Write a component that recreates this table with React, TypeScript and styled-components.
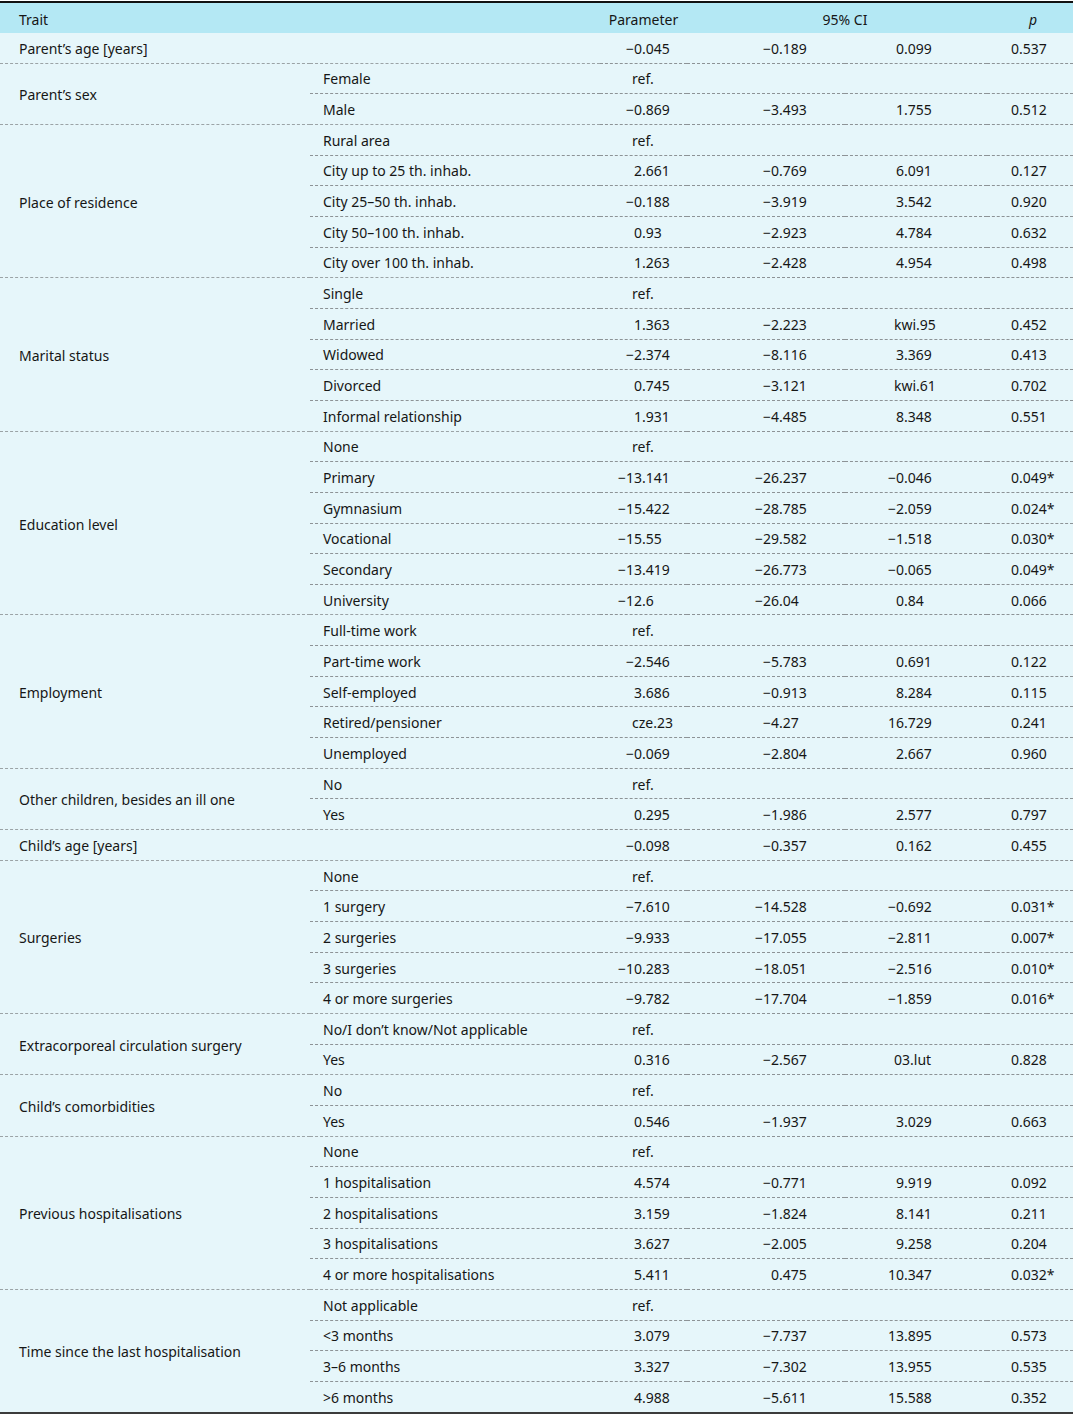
import styled, { createGlobalStyle } from "styled-components";

const GlobalStyle = createGlobalStyle`
    html, body {
        margin: 0;
        padding: 0;
        background: #ffffff;
    }
    body {
        font-family: "Noto Sans", "Open Sans", sans-serif;
        font-size: 14px;
        color: #161616;
    }
`;

const Table = styled.table`
    width: 1073px;
    margin-top: 1px;
    border-collapse: collapse;
    table-layout: fixed;
    border-top: 2px solid #111;
    border-bottom: 2px solid #3b3b3b;
    background: #e6f6fa;
`;

const HeadRow = styled.tr`
    background: #b4e8f4;
`;

const HeadCell = styled.th<{ $align?: string; $pl?: number; $pr?: number }>`
    height: 27px;
    padding: 3px ${(p) => p.$pr ?? 0}px 0 ${(p) => p.$pl ?? 0}px;
    font-weight: 400;
    line-height: 18px;
    text-align: ${(p) => p.$align ?? "center"};
    white-space: nowrap;
`;

const Italic = styled.i`
    font-family: "Noto Sans", sans-serif;
`;

const Row = styled.tr``;

const TraitCell = styled.td`
    padding: 3px 0 0 19px;
    line-height: 18px;
    border-bottom: 1px dashed #9ba3a6;
    vertical-align: middle;
    white-space: nowrap;
`;

const SubCell = styled.td<{ $last?: boolean }>`
    height: 27.67px;
    padding: 2px 0 0 13px;
    line-height: 18px;
    border-bottom: 1px dashed ${(p) => (p.$last ? "#9ba3a6" : "#8d9396")};
    white-space: nowrap;
`;

const NumCell = styled.td<{ $pr: number }>`
    padding: 2px ${(p) => p.$pr}px 0 0;
    line-height: 18px;
    text-align: right;
    border-bottom: 1px dashed #8d9396;
    white-space: nowrap;
`;

const Num = styled.span`
    display: inline-flex;
`;

const Int = styled.span`
    display: inline-block;
    width: 26px;
    text-align: right;
`;

const Frac = styled.span`
    display: inline-block;
    width: 28px;
    text-align: left;
    white-space: nowrap;
`;

const Txt = styled.span`
    display: inline-block;
    width: 54px;
    padding-left: 16px;
    box-sizing: border-box;
    text-align: left;
    white-space: nowrap;
`;

type Line = { label: string; vals?: string[] };
type Group = { trait: string; rows: Line[] };

const groups: Group[] = [
    { trait: "Parent’s age [years]", rows: [{ label: "", vals: ["−0.045", "−0.189", "0.099", "0.537"] }] },
    {
        trait: "Parent’s sex",
        rows: [
            { label: "Female" },
            { label: "Male", vals: ["−0.869", "−3.493", "1.755", "0.512"] },
        ],
    },
    {
        trait: "Place of residence",
        rows: [
            { label: "Rural area" },
            { label: "City up to 25 th. inhab.", vals: ["2.661", "−0.769", "6.091", "0.127"] },
            { label: "City 25–50 th. inhab.", vals: ["−0.188", "−3.919", "3.542", "0.920"] },
            { label: "City 50–100 th. inhab.", vals: ["0.93", "−2.923", "4.784", "0.632"] },
            { label: "City over 100 th. inhab.", vals: ["1.263", "−2.428", "4.954", "0.498"] },
        ],
    },
    {
        trait: "Marital status",
        rows: [
            { label: "Single" },
            { label: "Married", vals: ["1.363", "−2.223", "kwi.95", "0.452"] },
            { label: "Widowed", vals: ["−2.374", "−8.116", "3.369", "0.413"] },
            { label: "Divorced", vals: ["0.745", "−3.121", "kwi.61", "0.702"] },
            { label: "Informal relationship", vals: ["1.931", "−4.485", "8.348", "0.551"] },
        ],
    },
    {
        trait: "Education level",
        rows: [
            { label: "None" },
            { label: "Primary", vals: ["−13.141", "−26.237", "−0.046", "0.049*"] },
            { label: "Gymnasium", vals: ["−15.422", "−28.785", "−2.059", "0.024*"] },
            { label: "Vocational", vals: ["−15.55", "−29.582", "−1.518", "0.030*"] },
            { label: "Secondary", vals: ["−13.419", "−26.773", "−0.065", "0.049*"] },
            { label: "University", vals: ["−12.6", "−26.04", "0.84", "0.066"] },
        ],
    },
    {
        trait: "Employment",
        rows: [
            { label: "Full-time work" },
            { label: "Part-time work", vals: ["−2.546", "−5.783", "0.691", "0.122"] },
            { label: "Self-employed", vals: ["3.686", "−0.913", "8.284", "0.115"] },
            { label: "Retired/pensioner", vals: ["cze.23", "−4.27", "16.729", "0.241"] },
            { label: "Unemployed", vals: ["−0.069", "−2.804", "2.667", "0.960"] },
        ],
    },
    {
        trait: "Other children, besides an ill one",
        rows: [
            { label: "No" },
            { label: "Yes", vals: ["0.295", "−1.986", "2.577", "0.797"] },
        ],
    },
    { trait: "Child’s age [years]", rows: [{ label: "", vals: ["−0.098", "−0.357", "0.162", "0.455"] }] },
    {
        trait: "Surgeries",
        rows: [
            { label: "None" },
            { label: "1 surgery", vals: ["−7.610", "−14.528", "−0.692", "0.031*"] },
            { label: "2 surgeries", vals: ["−9.933", "−17.055", "−2.811", "0.007*"] },
            { label: "3 surgeries", vals: ["−10.283", "−18.051", "−2.516", "0.010*"] },
            { label: "4 or more surgeries", vals: ["−9.782", "−17.704", "−1.859", "0.016*"] },
        ],
    },
    {
        trait: "Extracorporeal circulation surgery",
        rows: [
            { label: "No/I don’t know/Not applicable" },
            { label: "Yes", vals: ["0.316", "−2.567", "03.lut", "0.828"] },
        ],
    },
    {
        trait: "Child’s comorbidities",
        rows: [
            { label: "No" },
            { label: "Yes", vals: ["0.546", "−1.937", "3.029", "0.663"] },
        ],
    },
    {
        trait: "Previous hospitalisations",
        rows: [
            { label: "None" },
            { label: "1 hospitalisation", vals: ["4.574", "−0.771", "9.919", "0.092"] },
            { label: "2 hospitalisations", vals: ["3.159", "−1.824", "8.141", "0.211"] },
            { label: "3 hospitalisations", vals: ["3.627", "−2.005", "9.258", "0.204"] },
            { label: "4 or more hospitalisations", vals: ["5.411", "0.475", "10.347", "0.032*"] },
        ],
    },
    {
        trait: "Time since the last hospitalisation",
        rows: [
            { label: "Not applicable" },
            { label: "<3 months", vals: ["3.079", "−7.737", "13.895", "0.573"] },
            { label: "3–6 months", vals: ["3.327", "−7.302", "13.955", "0.535"] },
            { label: ">6 months", vals: ["4.988", "−5.611", "15.588", "0.352"] },
        ],
    },
];

// right padding of each numeric column, so the decimals line up
const pads = [17, 38, 55, 26];

function Value({ v }: { v: string }) {
    const m = v.match(/^(−?\d+)(\.\d+\*?)$/);
    if (!m) return <Txt>{v}</Txt>;
    return (
        <Num>
            <Int>{m[1]}</Int>
            <Frac>{m[2]}</Frac>
        </Num>
    );
}

function App() {
    return (
        <>
            <GlobalStyle />
            <Table>
                <colgroup>
                    <col style={{ width: 310 }} />
                    <col style={{ width: 290 }} />
                    <col style={{ width: 87 }} />
                    <col style={{ width: 158 }} />
                    <col style={{ width: 142 }} />
                    <col style={{ width: 86 }} />
                </colgroup>
                <thead>
                    <HeadRow>
                        <HeadCell $align="left" $pl={19}>Trait</HeadCell>
                        <HeadCell />
                        <HeadCell>Parameter</HeadCell>
                        <HeadCell colSpan={2} $pl={16}>95% CI</HeadCell>
                        <HeadCell $pl={6}>
                            <Italic>p</Italic>
                        </HeadCell>
                    </HeadRow>
                </thead>
                <tbody>
                    {groups.map((g) =>
                        g.rows.map((r, i) => (
                            <Row key={g.trait + i}>
                                {i === 0 && <TraitCell rowSpan={g.rows.length}>{g.trait}</TraitCell>}
                                <SubCell $last={i === g.rows.length - 1}>{r.label}</SubCell>
                                {r.vals ? (
                                    r.vals.map((v, j) => (
                                        <NumCell key={j} $pr={pads[j]}>
                                            <Value v={v} />
                                        </NumCell>
                                    ))
                                ) : (
                                    <>
                                        <NumCell $pr={pads[0]}>
                                            <Value v="ref." />
                                        </NumCell>
                                        <NumCell $pr={pads[1]} />
                                        <NumCell $pr={pads[2]} />
                                        <NumCell $pr={pads[3]} />
                                    </>
                                )}
                            </Row>
                        ))
                    )}
                </tbody>
            </Table>
        </>
    );
}

export default App;
